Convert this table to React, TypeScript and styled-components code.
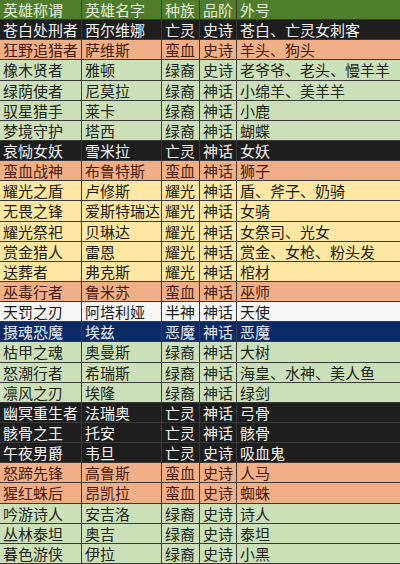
import React from "react";
import styled, { createGlobalStyle } from "styled-components";

const Global = createGlobalStyle`
  html, body { margin: 0; padding: 0; background: #ffffff; }
  body { font-family: "Noto Sans CJK SC", "Noto Sans", sans-serif; }
`;

type Race = "亡灵" | "蛮血" | "绿裔" | "耀光" | "半神" | "恶魔" | "header";

const palette: Record<Race, { bg: string; fg: string }> = {
  header: { bg: "#507d2c", fg: "#e4eedb" },
  亡灵: { bg: "#1e1e1e", fg: "#f4f4f4" },
  蛮血: { bg: "#f1af88", fg: "#4a1a0c" },
  绿裔: { bg: "#cbe0b8", fg: "#1d2418" },
  耀光: { bg: "#fde7a3", fg: "#221c10" },
  半神: { bg: "#f6f6f6", fg: "#1a1a1a" },
  恶魔: { bg: "#0c2a64", fg: "#e6ebf5" },
};

const rows: [string, string, Race, string, string][] = [
  ["苍白处刑者", "西尔维娜", "亡灵", "史诗", "苍白、亡灵女刺客"],
  ["狂野追猎者", "萨维斯", "蛮血", "史诗", "羊头、狗头"],
  ["橡木贤者", "雅顿", "绿裔", "史诗", "老爷爷、老头、慢羊羊"],
  ["绿荫使者", "尼莫拉", "绿裔", "神话", "小绵羊、美羊羊"],
  ["驭星猎手", "莱卡", "绿裔", "神话", "小鹿"],
  ["梦境守护", "塔西", "绿裔", "神话", "蝴蝶"],
  ["哀恸女妖", "雪米拉", "亡灵", "神话", "女妖"],
  ["蛮血战神", "布鲁特斯", "蛮血", "神话", "狮子"],
  ["耀光之盾", "卢修斯", "耀光", "神话", "盾、斧子、奶骑"],
  ["无畏之锋", "爱斯特瑞达", "耀光", "神话", "女骑"],
  ["耀光祭祀", "贝琳达", "耀光", "神话", "女祭司、光女"],
  ["赏金猎人", "雷恩", "耀光", "神话", "赏金、女枪、粉头发"],
  ["送葬者", "弗克斯", "耀光", "神话", "棺材"],
  ["巫毒行者", "鲁米苏", "蛮血", "神话", "巫师"],
  ["天罚之刃", "阿塔利娅", "半神", "神话", "天使"],
  ["摄魂恐魔", "埃兹", "恶魔", "神话", "恶魔"],
  ["枯甲之魂", "奥曼斯", "绿裔", "神话", "大树"],
  ["怒潮行者", "希瑞斯", "绿裔", "神话", "海皇、水神、美人鱼"],
  ["凛风之刃", "埃隆", "绿裔", "神话", "绿剑"],
  ["幽冥重生者", "法瑞奥", "亡灵", "神话", "弓骨"],
  ["骸骨之王", "托安", "亡灵", "神话", "骸骨"],
  ["午夜男爵", "韦旦", "亡灵", "史诗", "吸血鬼"],
  ["怒蹄先锋", "高鲁斯", "蛮血", "史诗", "人马"],
  ["猩红蛛后", "昂凯拉", "蛮血", "史诗", "蜘蛛"],
  ["吟游诗人", "安吉洛", "绿裔", "史诗", "诗人"],
  ["丛林泰坦", "奥吉", "绿裔", "史诗", "泰坦"],
  ["暮色游侠", "伊拉", "绿裔", "史诗", "小黑"],
];

const Table = styled.div`
  width: 400px;
  height: 564px;
  display: grid;
  grid-template-rows: repeat(28, 1fr);
  overflow: hidden;
`;

const Row = styled.div<{ $race: Race }>`
  display: grid;
  grid-template-columns: 82px 80px 38px 37px 1fr;
  background: ${(p) => palette[p.$race].bg};
  color: ${(p) => palette[p.$race].fg};
  border-bottom: 1px solid #3a3a3a;
  min-height: 0;
`;

const Cell = styled.div`
  display: flex;
  align-items: center;
  padding-left: 3px;
  font-size: 15px;
  line-height: 1;
  white-space: nowrap;
  overflow: hidden;
  border-right: 1px solid #3a3a3a;
  &:last-child { border-right: none; }
`;

export default function App() {
  return (
    <>
      <Global />
      <Table>
        <Row $race="header">
          <Cell>英雄称谓</Cell>
          <Cell>英雄名字</Cell>
          <Cell>种族</Cell>
          <Cell>品阶</Cell>
          <Cell>外号</Cell>
        </Row>
        {rows.map((r) => (
          <Row key={r[0]} $race={r[2]}>
            <Cell>{r[0]}</Cell>
            <Cell>{r[1]}</Cell>
            <Cell>{r[2]}</Cell>
            <Cell>{r[3]}</Cell>
            <Cell>{r[4]}</Cell>
          </Row>
        ))}
      </Table>
    </>
  );
}
